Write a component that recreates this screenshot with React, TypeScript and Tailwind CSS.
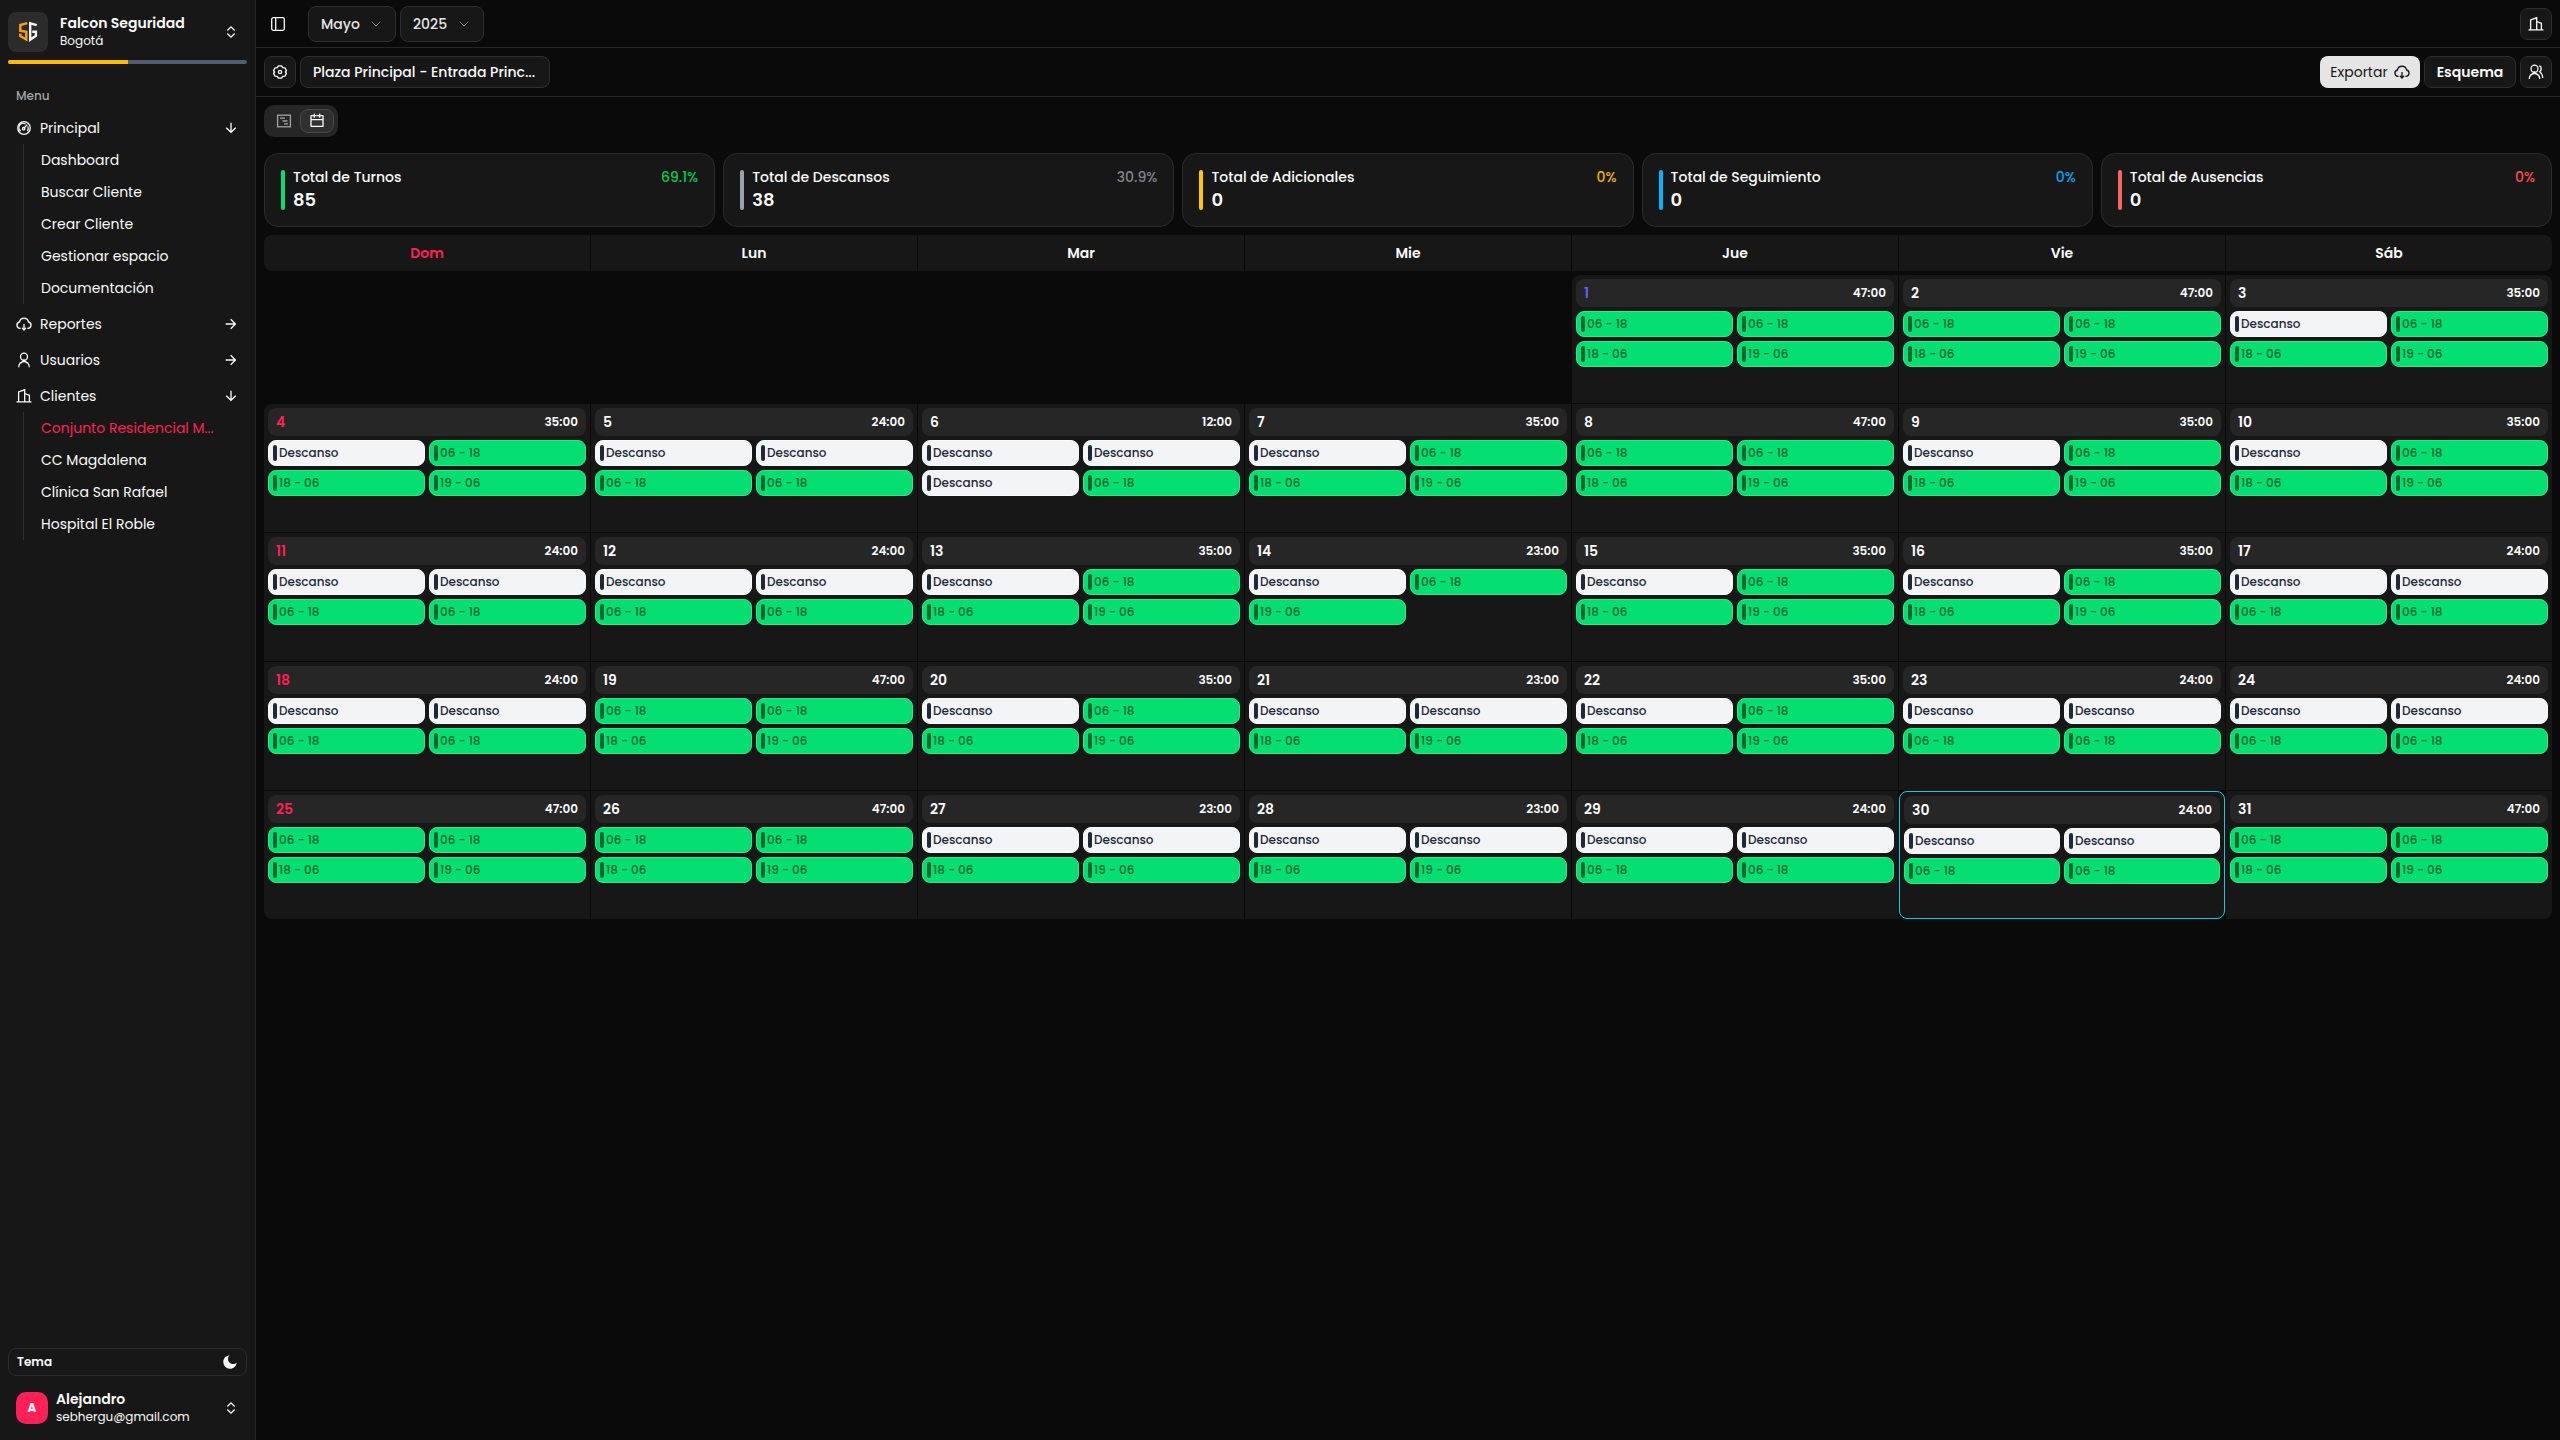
import { useState } from 'react'
import type { ReactNode } from 'react'
import clsx from 'clsx'
import { ChevronDown } from 'lucide-react'
import {
  RiArrowDownLine,
  RiArrowRightLine,
  RiCalendarLine,
  RiExpandUpDownLine,
  RiMoonFill,
} from 'react-icons/ri'

const REST = 'Descanso'

// Shift patterns, keyed by how the day is covered
const FULL = { hours: '47:00', shifts: ['06 - 18', '06 - 18', '18 - 06', '19 - 06'] }
const ONE_REST = { hours: '35:00', shifts: [REST, '06 - 18', '18 - 06', '19 - 06'] }
const DAY_ONLY = { hours: '24:00', shifts: [REST, REST, '06 - 18', '06 - 18'] }
const NIGHT_ONLY = { hours: '23:00', shifts: [REST, REST, '18 - 06', '19 - 06'] }
const SINGLE = { hours: '12:00', shifts: [REST, REST, REST, '06 - 18'] }
const SHORT = { hours: '23:00', shifts: [REST, '06 - 18', '19 - 06'] }

const DAYS = [
  FULL, FULL, ONE_REST,
  ONE_REST, DAY_ONLY, SINGLE, ONE_REST, FULL, ONE_REST, ONE_REST,
  DAY_ONLY, DAY_ONLY, ONE_REST, SHORT, ONE_REST, ONE_REST, DAY_ONLY,
  DAY_ONLY, FULL, ONE_REST, NIGHT_ONLY, ONE_REST, DAY_ONLY, DAY_ONLY,
  FULL, FULL, NIGHT_ONLY, NIGHT_ONLY, DAY_ONLY, DAY_ONLY, FULL,
]

const WEEKDAYS = ['Dom', 'Lun', 'Mar', 'Mie', 'Jue', 'Vie', 'Sáb']
const FIRST_WEEKDAY = 4
const TODAY = 30
const HOLIDAYS = [1]

const MONTHS = ['Enero', 'Febrero', 'Marzo', 'Abril', 'Mayo', 'Junio', 'Julio', 'Agosto', 'Septiembre', 'Octubre', 'Noviembre', 'Diciembre']
const YEARS = ['2024', '2025', '2026']

const STATS = [
  { label: 'Total de Turnos', value: 85, percent: '69.1%', bar: 'bg-[#05df72]', text: 'text-[#00c950]' },
  { label: 'Total de Descansos', value: 38, percent: '30.9%', bar: 'bg-[#99a1af]', text: 'text-[#7d8491]' },
  { label: 'Total de Adicionales', value: 0, percent: '0%', bar: 'bg-[#ffc800]', text: 'text-[#f0b100]' },
  { label: 'Total de Seguimiento', value: 0, percent: '0%', bar: 'bg-[#00b8ff]', text: 'text-[#00a6f4]' },
  { label: 'Total de Ausencias', value: 0, percent: '0%', bar: 'bg-[#ff6467]', text: 'text-[#fb4a50]' },
]

function Icon({ children, className }: { children: ReactNode; className?: string }) {
  return (
    <svg
      viewBox="0 0 16 16"
      fill="none"
      stroke="currentColor"
      strokeWidth="1.3"
      aria-hidden="true"
      className={clsx('size-4 shrink-0', className)}
    >
      {children}
    </svg>
  )
}

const GaugeIcon = () => (
  <Icon>
    <circle cx="8" cy="8" r="6.3" />
    <path d="M4.700 11A4.200 4.200 0 0 1 9.500 4.100M11.900 6.500a4.200 4.200 0 0 1-.6 4.500" />
    <circle cx="7.600" cy="8.700" r="1.200" />
    <path d="m8.400 7.800 2.900-3.200" />
  </Icon>
)

const CloudIcon = () => (
  <Icon>
    <path d="M4.600 12.300H4a3.200 3.200 0 0 1-.6-6.300 4.700 4.700 0 0 1 9.200 0 3.200 3.200 0 0 1-.6 6.300h-.6" />
    <path d="M8 8v5.600M5.900 11.800 8 14l2.100-2.200" />
  </Icon>
)

const UserIcon = () => (
  <Icon>
    <circle cx="8" cy="4.700" r="3.500" />
    <path d="M2.700 15.200c.2-3.300 2-5.500 5.300-5.500s5.100 2.200 5.300 5.500M4.700 11.300 8 8.200l3.300 3.100" />
  </Icon>
)

const UsersIcon = () => (
  <Icon>
    <circle cx="6.500" cy="4.700" r="3.500" />
    <path d="M1.200 15c.2-3.300 2-5.300 5.300-5.300s5.100 2 5.300 5.300M3.200 11.100l3.300-2.900 3.300 2.900" />
    <path d="M11.300 1.700a3.500 3.500 0 0 1 .4 6c1.800 1.300 2.900 3.200 3.100 6.300" />
  </Icon>
)

const BuildingIcon = () => (
  <Icon>
    <path d="M.5 13.800h15M2.600 13.800V4L8.700 1.800v12M8.700 5.500l4.700 1.800v6.500" />
  </Icon>
)

const PanelIcon = () => (
  <Icon>
    <rect x="1.700" y="1.700" width="12.600" height="12.600" rx="1.500" />
    <path d="M5.700 1.700v12.600" />
  </Icon>
)

const GanttIcon = () => (
  <Icon>
    <rect x="1.600" y="2.200" width="12.800" height="11.600" />
    <path d="M4 5.200h5M6.500 8h5M8 10.800h4" />
  </Icon>
)

const GearIcon = () => (
  <Icon>
    <path
      strokeLinejoin="round"
      d="M6.400 1.800h3.200l1.100 1.900 2.200.1 1.600 2.700L13.400 8l1.100 1.500-1.600 2.700-2.200.1-1.100 1.900H6.400l-1.100-1.900-2.200-.1-1.600-2.700L2.600 8 1.500 6.500l1.600-2.700 2.200-.1z"
    />
    <circle cx="8" cy="8" r="1.600" />
  </Icon>
)

const MENU = [
  {
    label: 'Principal',
    icon: <GaugeIcon />,
    items: ['Dashboard', 'Buscar Cliente', 'Crear Cliente', 'Gestionar espacio', 'Documentación'],
  },
  { label: 'Reportes', icon: <CloudIcon />, items: [] },
  { label: 'Usuarios', icon: <UserIcon />, items: [] },
  {
    label: 'Clientes',
    icon: <BuildingIcon />,
    items: ['Conjunto Residencial M...', 'CC Magdalena', 'Clínica San Rafael', 'Hospital El Roble'],
  },
]
const ACTIVE_ITEM = 'Conjunto Residencial M...'

function Logo() {
  return (
    <span className="flex size-10 shrink-0 items-center justify-center rounded-lg bg-[#2b2b2b]">
      <svg viewBox="0 0 20 22" fill="none" strokeWidth="2.4" className="h-[22px] w-5" aria-hidden="true">
        <path stroke="#f5a30c" d="M9.300 2.200 2.300 4v5.800l6 1v7.700L2.300 15v-2.500" />
        <path stroke="#f4f4f5" d="M18.700 4.200 12.200 2.300v16.400l5.700-3.900v-4h-3.700" />
      </svg>
    </span>
  )
}

function Sidebar() {
  return (
    <aside className="sticky top-0 flex h-screen w-64 shrink-0 flex-col border-r border-[#262626] bg-[#171717]">
      <button type="button" className="mt-3 flex h-10 items-center gap-3 pr-4 pl-2 text-left">
        <Logo />
        <span className="flex min-w-0 flex-1 flex-col">
          <span className="text-sm leading-[18px] font-semibold">Falcon Seguridad</span>
          <span className="text-xs leading-[18px]">Bogotá</span>
        </span>
        <RiExpandUpDownLine className="size-4" />
      </button>
      <div className="mx-2 mt-2 h-1 overflow-hidden rounded-sm bg-[#515e70]">
        <div className="h-full w-1/2 bg-[#ffb900]" />
      </div>

      <nav className="mt-4 flex flex-col gap-1">
        <p className="-mb-1 flex h-8 items-center px-4 text-xs font-medium text-[#a3a3a3]">Menu</p>
        {MENU.map((group) => (
          <div key={group.label}>
            <button type="button" className="flex h-8 w-full items-center gap-2 px-4 text-sm">
              {group.icon}
              <span className="flex-1 text-left">{group.label}</span>
              {group.items.length > 0 ? (
                <RiArrowDownLine className="size-4" />
              ) : (
                <RiArrowRightLine className="size-4" />
              )}
            </button>
            {group.items.length > 0 && (
              <ul className="ml-[23px] border-l border-[#2e2e2e] pl-[17px]">
                {group.items.map((item) => (
                  <li key={item}>
                    <a
                      href="#"
                      className={clsx(
                        'flex h-8 items-center text-sm whitespace-nowrap',
                        item === ACTIVE_ITEM && 'text-[#ff2056]',
                      )}
                    >
                      {item}
                    </a>
                  </li>
                ))}
              </ul>
            )}
          </div>
        ))}
      </nav>

      <div className="mt-auto flex flex-col gap-2 p-2">
        <button
          type="button"
          className="flex h-7 items-center justify-between rounded-lg border border-[#2b2b2b] px-2 text-xs font-semibold"
        >
          Tema
          <RiMoonFill className="size-4" />
        </button>
        <button type="button" className="flex h-12 items-center gap-2 px-2 text-left">
          <span className="flex size-8 items-center justify-center rounded-[10px] bg-[#ff2056] text-xs font-bold">
            A
          </span>
          <span className="flex min-w-0 flex-1 flex-col">
            <span className="text-sm leading-[18px] font-semibold">Alejandro</span>
            <span className="text-xs leading-[18px]">sebhergu@gmail.com</span>
          </span>
          <RiExpandUpDownLine className="size-4" />
        </button>
      </div>
    </aside>
  )
}

type PickerProps = {
  label: string
  value: string
  options: string[]
  className: string
  onChange: (value: string) => void
}

function Picker({ label, value, options, className, onChange }: PickerProps) {
  return (
    <div className={clsx('relative', className)}>
      <select
        aria-label={label}
        value={value}
        onChange={(e) => onChange(e.target.value)}
        className="h-9 w-full appearance-none rounded-lg border border-[#2e2e2e] bg-[#171717] px-3 text-sm font-medium text-[#e5e5e5]"
      >
        {options.map((option) => (
          <option key={option}>{option}</option>
        ))}
      </select>
      <ChevronDown
        strokeWidth={1.5}
        className="pointer-events-none absolute top-2.5 right-3 size-4 text-[#737373]"
      />
    </div>
  )
}

function IconButton({ label, children }: { label: string; children: ReactNode }) {
  return (
    <button
      type="button"
      aria-label={label}
      className="flex size-8 items-center justify-center rounded-lg border border-[#2e2e2e] bg-[#171717]"
    >
      {children}
    </button>
  )
}

function Shift({ name }: { name: string }) {
  const isRest = name === REST
  return (
    <div
      className={clsx(
        'flex h-[26px] items-center gap-0.5 rounded-lg border px-1 text-xs font-medium',
        isRest
          ? 'border-[#f9fafb] bg-[#f3f4f6] text-[#1e2939]'
          : 'border-[#2be88a] bg-[#05df72] text-[#016630]',
      )}
    >
      <span className={clsx('h-4 w-1 rounded-sm', isRest ? 'bg-[#1e2939]' : 'bg-[#016630]')} />
      {name}
    </div>
  )
}

function DayCell({ day }: { day: number }) {
  const { hours, shifts } = DAYS[day - 1]
  const isSunday = (day + FIRST_WEEKDAY - 1) % 7 === 0

  return (
    <div
      className={clsx(
        'flex h-32 flex-col gap-1 bg-[#171717] p-1',
        day === TODAY && 'rounded-lg border border-[#00d3f2]',
        (day === 1 || day === 4) && 'rounded-tl-lg',
        day === 3 && 'rounded-tr-lg',
        day === 25 && 'rounded-bl-lg',
        day === 31 && 'rounded-br-lg',
      )}
    >
      <div className="flex h-7 items-center justify-between rounded-lg bg-[#262626] px-2">
        <span
          className={clsx(
            'text-sm font-semibold',
            isSunday && 'text-[#ff2056]',
            HOLIDAYS.includes(day) && 'text-[#615fff]',
          )}
        >
          {day}
        </span>
        <span className="text-xs font-semibold">{hours}</span>
      </div>
      <div className="grid grid-cols-2 gap-1">
        {shifts.map((shift, i) => (
          <Shift key={i} name={shift} />
        ))}
      </div>
    </div>
  )
}

export default function App() {
  const [month, setMonth] = useState('Mayo')
  const [year, setYear] = useState('2025')

  return (
    <div className="flex min-h-screen bg-[#0a0a0a] font-[Poppins,Inter,sans-serif] text-[#fafafa]">
      <Sidebar />

      <div className="flex min-w-0 flex-1 flex-col">
        <header className="flex h-12 items-center gap-1 border-b border-[#262626] px-2">
          <button type="button" aria-label="Ocultar menú" className="mr-3 flex size-7 items-center justify-center">
            <PanelIcon />
          </button>
          <Picker label="Mes" value={month} options={MONTHS} onChange={setMonth} className="w-[88px]" />
          <Picker label="Año" value={year} options={YEARS} onChange={setYear} className="w-[84px]" />
          <div className="ml-auto">
            <IconButton label="Espacios">
              <BuildingIcon />
            </IconButton>
          </div>
        </header>

        <div className="flex items-center gap-1 border-b border-[#262626] p-2">
          <IconButton label="Configuración">
            <GearIcon />
          </IconButton>
          <button
            type="button"
            className="h-8 w-[250px] truncate rounded-lg border border-[#2e2e2e] bg-[#171717] px-3 text-left text-sm font-medium"
          >
            Plaza Principal - Entrada Princ...
          </button>
          <button
            type="button"
            className="ml-auto flex h-8 w-[100px] items-center justify-center gap-1.5 rounded-lg bg-[#e5e5e5] text-sm text-[#171717]"
          >
            Exportar
            <CloudIcon />
          </button>
          <button
            type="button"
            className="h-8 w-[92px] rounded-lg border border-[#2e2e2e] bg-[#171717] text-sm font-semibold"
          >
            Esquema
          </button>
          <IconButton label="Personal">
            <UsersIcon />
          </IconButton>
        </div>

        <main className="flex flex-col p-2">
          <div className="flex h-8 w-[74px] rounded-[10px] bg-[#262626] p-1">
            <button
              type="button"
              aria-label="Vista de cronograma"
              className="flex flex-1 items-center justify-center text-[#a3a3a3]"
            >
              <GanttIcon />
            </button>
            <button
              type="button"
              aria-label="Vista de calendario"
              className="flex flex-1 items-center justify-center rounded-lg border border-[#484848] bg-[#303030]"
            >
              <RiCalendarLine className="size-4" />
            </button>
          </div>

          <section className="mt-4 grid grid-cols-5 gap-2">
            {STATS.map((stat) => (
              <div
                key={stat.label}
                className="flex gap-2 rounded-[14px] border border-[#2b2b2b] bg-[#171717] px-4 pt-4 pb-2.5"
              >
                <span className={clsx('h-10 w-1 rounded-sm', stat.bar)} />
                <div className="flex-1">
                  <p className="text-sm leading-[14px] font-medium">{stat.label}</p>
                  <p className="text-lg leading-8 font-semibold">{stat.value}</p>
                </div>
                <span className={clsx('text-sm leading-[14px] font-medium', stat.text)}>{stat.percent}</span>
              </div>
            ))}
          </section>

          <section aria-label={`${month} ${year}`} className="mt-2">
            <div className="grid grid-cols-7 gap-px overflow-hidden rounded-lg text-sm font-semibold">
              {WEEKDAYS.map((name, i) => (
                <div
                  key={name}
                  className={clsx(
                    'flex h-9 items-center justify-center bg-[#171717]',
                    i === 0 && 'text-[#ff2056]',
                  )}
                >
                  {name}
                </div>
              ))}
            </div>
            <div className="mt-1 grid grid-cols-7 gap-px">
              <div className="col-span-4" />
              {DAYS.map((_, i) => (
                <DayCell key={i} day={i + 1} />
              ))}
            </div>
          </section>
        </main>
      </div>
    </div>
  )
}
